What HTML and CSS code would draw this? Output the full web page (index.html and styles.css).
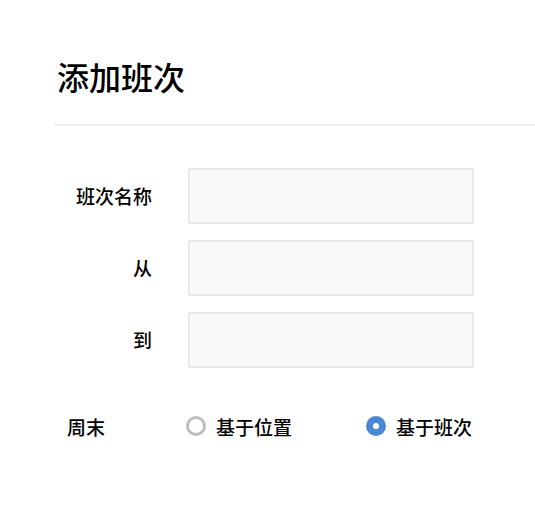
FILE: index.html
```html
<!DOCTYPE html>
<html lang="zh-CN">
<head>
<meta charset="utf-8">
<link rel="stylesheet" href="styles.css">
</head>
<body>
<div class="header"><h1 class="title">添加班次</h1></div>
<div class="form">
  <div class="row"><label class="label">班次名称</label><div class="input"></div></div>
  <div class="row"><label class="label">从</label><div class="input"></div></div>
  <div class="row"><label class="label">到</label><div class="input"></div></div>
</div>
<div class="weekend">
  <span class="wlabel">周末</span>
  <span class="option"><span class="radio"></span><span class="otext">基于位置</span></span>
  <span class="option"><span class="radio checked"></span><span class="otext">基于班次</span></span>
</div>
</body>
</html>
```
FILE: styles.css
```css
html, body {
  margin: 0;
  padding: 0;
  background: #ffffff;
  font-family: "Noto Sans CJK SC", "Noto Sans", sans-serif;
  color: #000000;
}
.header {
  margin-left: 54px;
  padding: 52px 0 24px 3px;
  border-bottom: 2px solid #eeeeee;
}
.title {
  margin: 0;
  font-size: 32px;
  line-height: 48px;
  font-weight: 500;
}
.form {
  margin-top: 42px;
  padding-left: 54px;
  display: flex;
  flex-direction: column;
  gap: 16px;
}
.row {
  display: grid;
  grid-template-columns: 98px 286px;
  column-gap: 36px;
  align-items: center;
}
.label {
  text-align: right;
  font-size: 19px;
  font-weight: 500;
  line-height: 56px;
}
.input {
  box-sizing: border-box;
  height: 56px;
  border: 2px solid #e8e8e8;
  background: #f9f9f9;
}
.weekend {
  margin-top: 38px;
  padding-left: 67px;
  display: flex;
  align-items: center;
  height: 40px;
}
.wlabel {
  flex: 0 0 119px;
  font-size: 19px;
  font-weight: 500;
}
.option {
  flex: 0 0 180px;
  display: flex;
  align-items: center;
  gap: 10px;
}
.otext {
  font-size: 19px;
  font-weight: 500;
}
.radio {
  box-sizing: border-box;
  flex: 0 0 20px;
  width: 20px;
  height: 20px;
  border-radius: 50%;
  border: 3px solid #bdbdbd;
  background: #ffffff;
  display: flex;
  align-items: center;
  justify-content: center;
}
.radio.checked {
  border: none;
  background: #4a87d5;
}
.radio.checked::after {
  content: "";
  width: 6px;
  height: 6px;
  border-radius: 50%;
  background: #ffffff;
}
```
